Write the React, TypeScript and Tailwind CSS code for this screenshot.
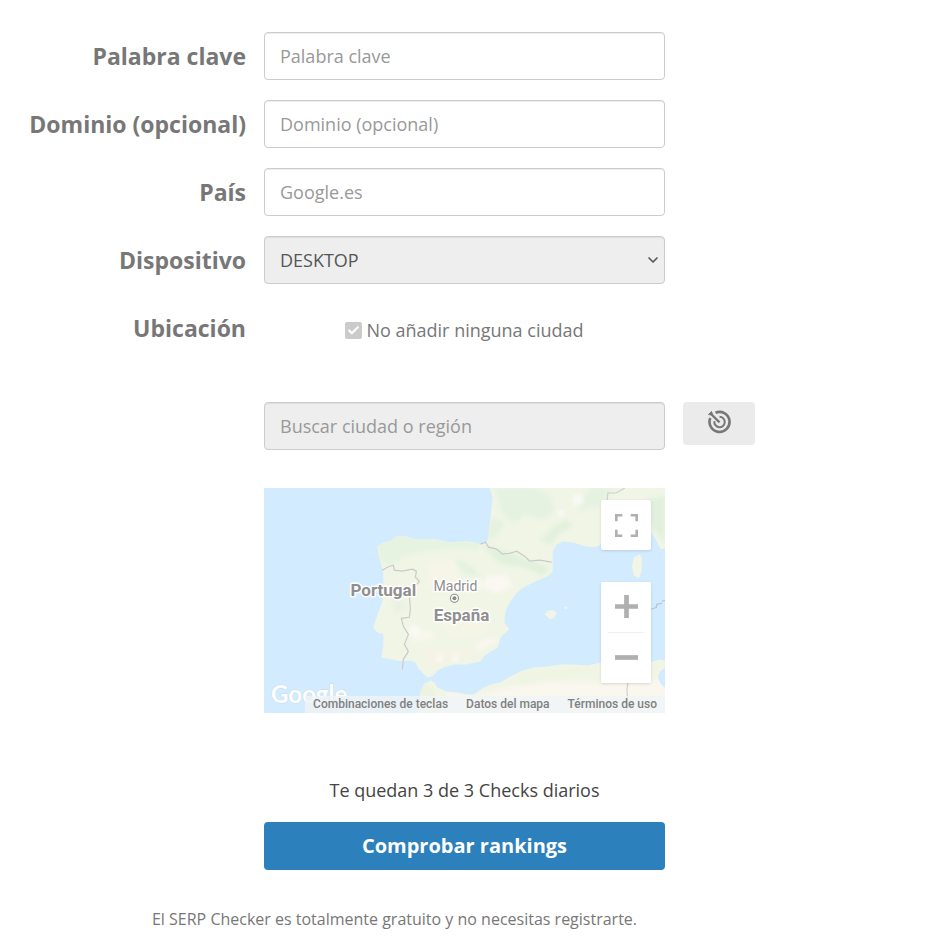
import type { ReactNode } from "react"
import { Check, ChevronDown } from "lucide-react"

const fieldClass =
  "h-12 w-full rounded border border-[#cccccc] px-[15px] text-[18px] text-[#555555] shadow-[inset_0_1px_1px_rgba(0,0,0,0.075)] placeholder:text-[#999999] outline-none focus:border-[#66afe9]"

interface RowProps {
  label?: string
  htmlFor?: string
  children: ReactNode
  extra?: ReactNode
}

function Row({ label, htmlFor, children, extra }: RowProps) {
  return (
    <div className="grid grid-cols-[246fr_401fr_245fr] gap-x-[18px]">
      <div className="flex h-12 items-center justify-end">
        {label && (
          <label htmlFor={htmlFor} className="whitespace-nowrap text-[23px] leading-8 font-bold text-[#777777]">
            {label}
          </label>
        )}
      </div>
      <div>{children}</div>
      <div>{extra}</div>
    </div>
  )
}

function TargetIcon() {
  return (
    <svg viewBox="0 0 24 24" className="size-6" fill="none" stroke="#777777" aria-hidden>
      <path d="M8.500 2.800A10 10 0 1 1 3.300 8.100" strokeWidth="2.600" />
      <path d="M12.500 6.800A5.200 5.200 0 1 1 7.400 11.200" strokeWidth="2" />
      <path d="M3.500 3.500l9 8.800" strokeWidth="2.400" />
      <path d="M1.500 4.500L4.500 1.500l1.200 3.600z" fill="#777777" strokeWidth="1" />
    </svg>
  )
}

function MapDrawing() {
  return (
    <svg viewBox="0 0 400 224" className="block w-full" role="img" aria-label="Mapa de España">
      <defs>
        <filter id="soft" x="-20%" y="-20%" width="140%" height="140%">
          <feGaussianBlur stdDeviation="2" />
        </filter>
        <clipPath id="land">
          <path d="M225 0L228 9 226 29 223 53 216 56 210 54 201 53 185 54 169 51 150 51 141 48 133 48 127 52 120 54 113 58 114 65 116 73 119 84 119 98 118 113 113 127 109 139 113 144 119 146 119 158 117 169 127 171 138 173 145 172 151 174 154 180 158 184 163 189 169 187 173 182 179 179 190 176 201 176 216 173 220 167 228 162 233 159 236 149 245 141 240 135 240 128 242 120 246 113 251 106 256 101 265 96 276 91 283 88 288 83 288 72 288 63 292 56 299 53 311 55 320 58 329 59 337 56 350 51 364 42 376 40 388 46 392 54 396 61 400 60V0z" />
          <path d="M154 225L156 204 159 196 166 192 170 194 173 199 182 203 193 204 202 206 209 206 219 199 226 196 236 194 246 188 258 182 269 179 283 178 296 176 310 176 323 177 336 174 350 174 366 172 380 175 388 173 394 171 400 172V225z" />
          <path d="M280 126l4-4 5 0 3 3-3 5-4 1z" />
          <path d="M299 119l3-1 1 2-3 1z" />
          <path d="M369 69l6-3 2 4 0 12-3 8-5-3-2-8z" />
          <path d="M362 96l12-2 4 6-2 22-10 4-4-8z" />
        </clipPath>
      </defs>
      <rect width="400" height="225" fill="#d3ebfe" />
      <g clipPath="url(#land)">
        <rect width="400" height="225" fill="#f0f5e6" />
        {/* Green and dry patches of terrain */}
        <g filter="url(#soft)">
          <path d="M113 50L133 45 165 50 216 54 214 62 190 60 168 62 142 67 126 78 115 72z" fill="#e6f3e1" />
          <path d="M230 0h40l15 8 5 14-12 9-18-4-10 8-12-9z" fill="#e5f2e1" />
          <path d="M226 30l14 4-8 13-10 6z" fill="#e4f2df" />
          <path d="M217 56l20 6 24 9 24 8-6 8-20-8-24-4z" fill="#e1f0dd" />
          <path d="M275 52l15-14 12-6 6 6-14 8-7 10z" fill="#e2f1de" />
          <path d="M315 24l22-8 13-16h-24l-10 12z" fill="#e6f2e1" />
          <path d="M380 12l20-4v45l-14-14z" fill="#e0f0dd" />
          <path d="M190 71l12 3 9 7 4 8-12-3-9-7z" fill="#e4f2df" />
          <path d="M128 110l12 5 2 8-12 2z" fill="#e9f2e0" />
          <path d="M158 158l28 4 16-4 10 6-26 8-24 8z" fill="#f5f3e5" />
          <path d="M165 76l24-6 7 20-16 12-18-6z" fill="#f7f5e8" />
          <path d="M222 88l20-2 6 12-16 7-14-6z" fill="#fbf8f1" />
          <path d="M145 140l20 2 8 8-26 4z" fill="#f8f7ea" />
          <path d="M170 130l25-5 33 8-7 12-30 6z" fill="#f5f5e6" />
          <path d="M210 156l20-8 3 5-18 9z" fill="#fbf7ef" />
          <path d="M183 205l26 3 40-10 40-5 50 1 61-3v34H180z" fill="#faf7ee" />
          <path d="M230 198l30-14 50-5 35 2-36 7-40 5z" fill="#f0f4e2" />
          <path d="M350 178l20-4 16 3-16 9-16 3z" fill="#e7f2df" />
          <path d="M156 195l12 3 5 17-16 8z" fill="#edf3df" />
        </g>
        <g fill="#ffffff" opacity="0.5" filter="url(#soft)">
          <circle cx="150" cy="142" r="6" />
          <circle cx="175" cy="170" r="4" />
          <circle cx="191" cy="170" r="4" />
          <circle cx="212" cy="96" r="6" />
          <circle cx="313" cy="12" r="6" />
          <circle cx="296" cy="25" r="4" />
        </g>
      </g>
      <path d="M400 179l-5 4-2 6 3 7 4 3z" fill="#d3ebfe" />
      {/* Borders */}
      <g fill="none" stroke="#c9cbc8" strokeWidth="1.2">
        <path d="M118 82l5-3 6-2 1 5 8 1 10-2 4 2-1 6 4 4-5 6-5 8 1 14-1 8-8 1 2 8 5 8-4 10 4 7-5 8-1 10" />
        <path d="M216 56l5-2 3 5 8 2 6 5 8-1 6-2 8 5 5 5 10-1 12 2" />
        <path d="M363 194l-1 8 1 10-2 13M360 0l-9 5-8 0-1 10" stroke="#d0d1cf" />
        <path d="M386 121l6-2M391 119l1-3 5-1M397 113l3-1" stroke="#bac2d0" />
      </g>
      <g fontFamily="Roboto, sans-serif" fill="#8f8f8f" stroke="#ffffff" strokeWidth="3" strokeLinejoin="round" paintOrder="stroke" textAnchor="middle">
        <text x="119" y="108" fontSize="17" fontWeight="700">Portugal</text>
        <text x="191" y="103" fontSize="14">Madrid</text>
        <text x="197" y="133" fontSize="17" fontWeight="700">España</text>
      </g>
      <circle cx="190" cy="110" r="4" fill="#ffffff" stroke="#969696" strokeWidth="1.2" />
      <circle cx="190" cy="110" r="2" fill="#888888" />
      <text x="7" y="214" fontFamily="Lato, sans-serif" fontSize="24" fontWeight="700" fill="#ffffff" stroke="#c6dcee" strokeWidth="1" paintOrder="stroke">
        Google
      </text>
    </svg>
  )
}

const mapButtonClass = "flex w-[50px] items-center justify-center bg-white"

function MapPanel() {
  return (
    <div className="relative overflow-hidden font-[Roboto,sans-serif]">
      <MapDrawing />
      <button
        type="button"
        aria-label="Pantalla completa"
        className={`${mapButtonClass} absolute top-3 right-3.5 h-[50px] rounded-[2px] shadow-[0_1px_3px_rgba(0,0,0,0.12)]`}
      >
        <svg viewBox="0 0 22 22" className="size-[23px]" fill="none" stroke="#b0b0b0" strokeWidth="2.500" aria-hidden>
          <path d="M1.250 7V1.250H7M15 1.250h5.750V7M20.750 15v5.750H15M7 20.750H1.250V15" />
        </svg>
      </button>
      <div className="absolute right-3.5 bottom-[30px] flex flex-col items-center rounded-[2px] bg-white shadow-[0_1px_3px_rgba(0,0,0,0.12)]">
        <button type="button" aria-label="Acercar" className={`${mapButtonClass} h-[50px] rounded-[2px]`}>
          <svg viewBox="0 0 22 22" className="size-[23px]" stroke="#b0b0b0" strokeWidth="4.500" aria-hidden>
            <path d="M11 0v22M0 11h22" />
          </svg>
        </button>
        <div className="h-px w-9 bg-[#f0f0f0]" />
        <button type="button" aria-label="Alejar" className={`${mapButtonClass} h-[50px] rounded-[2px]`}>
          <svg viewBox="0 0 22 22" className="size-[23px]" stroke="#b0b0b0" strokeWidth="4.500" aria-hidden>
            <path d="M0 11h22" />
          </svg>
        </button>
      </div>
      <div className="absolute right-0 bottom-0 flex h-[17px] items-center gap-[18px] bg-[#f0f4f6]/80 pr-2 pl-2 text-[12px] leading-4 font-medium whitespace-nowrap text-[#808080]">
        <a href="#combinaciones">Combinaciones de teclas</a>
        <a href="#datos">Datos del mapa</a>
        <a href="#terminos">Términos de uso</a>
      </div>
    </div>
  )
}

export default function App() {
  return (
    <main className="bg-white pt-8 pb-5 font-['Open_Sans',sans-serif]">
      <form className="flex flex-col" onSubmit={(e) => e.preventDefault()}>
        <div className="flex flex-col gap-5">
          <Row label="Palabra clave" htmlFor="keyword">
            <input id="keyword" type="text" placeholder="Palabra clave" className={fieldClass} />
          </Row>
          <Row label="Dominio (opcional)" htmlFor="domain">
            <input id="domain" type="text" placeholder="Dominio (opcional)" className={fieldClass} />
          </Row>
          <Row label="País" htmlFor="country">
            <input id="country" type="text" placeholder="Google.es" className={fieldClass} />
          </Row>
          <Row label="Dispositivo" htmlFor="device">
            <div className="relative">
              <select id="device" disabled className={`${fieldClass} appearance-none bg-[#eeeeee] opacity-100`}>
                <option>DESKTOP</option>
              </select>
              <ChevronDown className="pointer-events-none absolute top-4 right-1 size-4 text-[#555555]" strokeWidth={2.5} />
            </div>
          </Row>
          <Row label="Ubicación" htmlFor="no-city">
            <div className="flex h-[52px] items-center justify-center gap-1 text-[18px] text-[#777777]">
              <span className="relative size-[17px]">
                <input
                  id="no-city"
                  type="checkbox"
                  defaultChecked
                  disabled
                  className="block size-[17px] appearance-none rounded-[2px] bg-[#cbcbcb]"
                />
                <Check className="pointer-events-none absolute top-0.5 left-0.5 size-[13px] text-white" strokeWidth={4} />
              </span>
              <label htmlFor="no-city">No añadir ninguna ciudad</label>
            </div>
          </Row>
        </div>

        <div className="mt-[46px]">
          <Row
            extra={
              <button
                type="button"
                aria-label="Usar mi ubicación"
                className="flex h-[43px] w-[72px] items-center justify-center rounded bg-[#ebebeb] pb-1"
              >
                <TargetIcon />
              </button>
            }
          >
            <input
              id="city"
              type="text"
              disabled
              aria-label="Buscar ciudad o región"
              placeholder="Buscar ciudad o región"
              className={`${fieldClass} bg-[#eeeeee]`}
            />
          </Row>
        </div>

        <div className="mt-[38px]">
          <Row>
            <MapPanel />
          </Row>
        </div>

        <div className="mt-[63px]">
          <Row>
            <p className="text-center text-[18px] leading-7 text-[#444444]">Te quedan 3 de 3 Checks diarios</p>
            <button
              type="submit"
              className="mt-[18px] h-12 w-full rounded bg-[#2c80bb] text-[20px] font-bold text-white hover:bg-[#256d9f]"
            >
              Comprobar rankings
            </button>
          </Row>
        </div>

        <p className="mt-[35px] pr-[139px] text-center text-[16px] leading-7 text-[#777777]">
          El SERP Checker es totalmente gratuito y no necesitas registrarte.
        </p>
      </form>
    </main>
  )
}
